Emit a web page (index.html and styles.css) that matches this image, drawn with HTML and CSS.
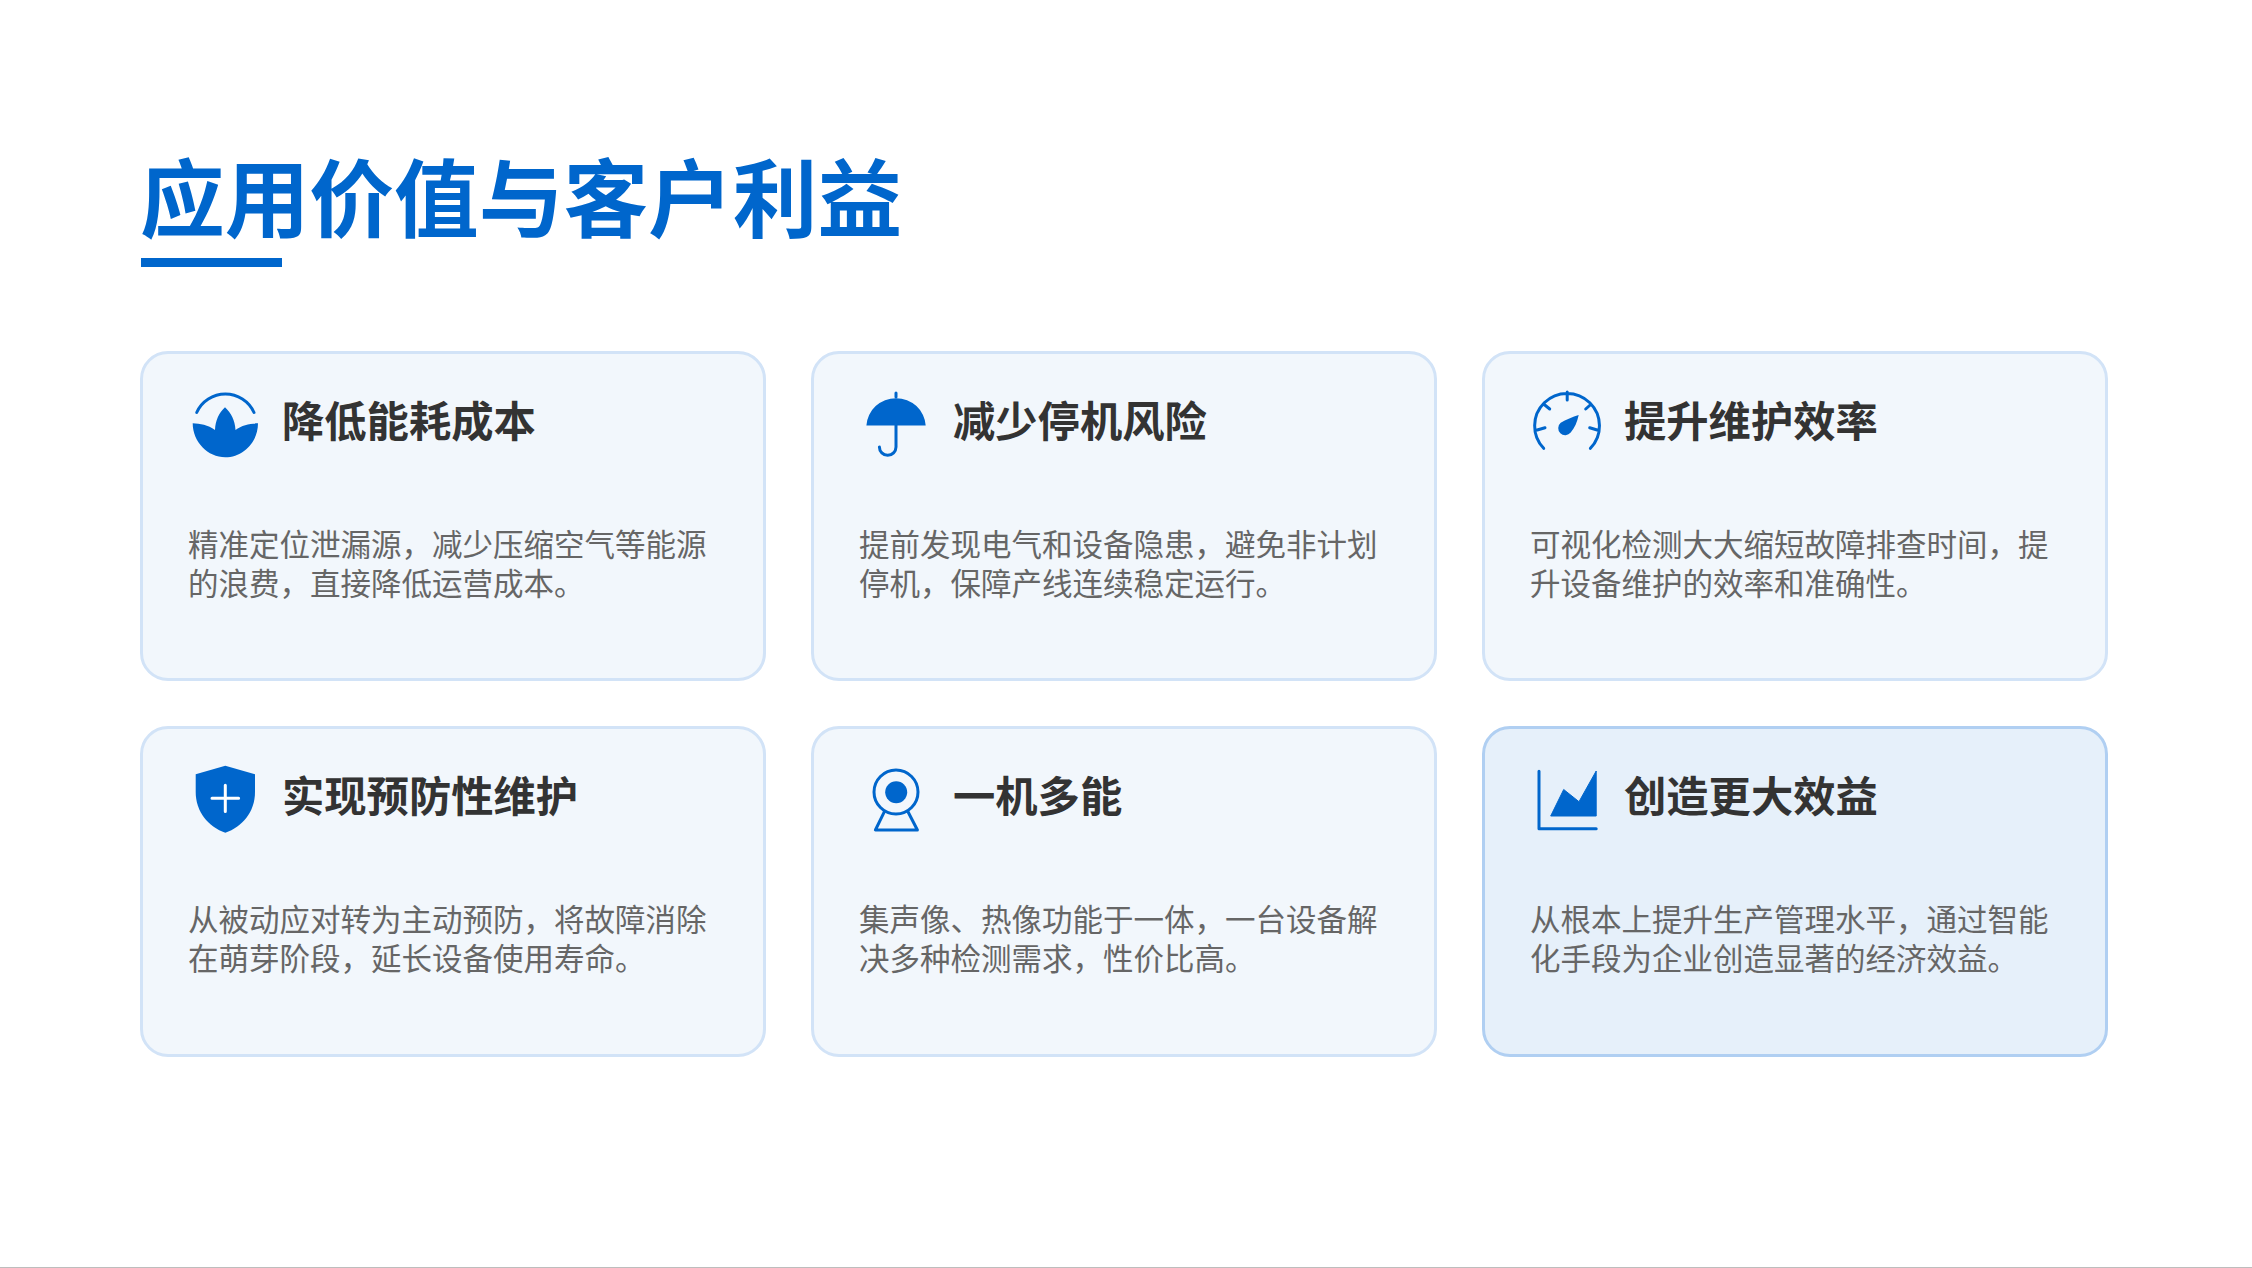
FILE: index.html
```html
<!DOCTYPE html>
<html lang="zh-CN">
<head>
<meta charset="utf-8">
<title>应用价值与客户利益</title>
<link rel="stylesheet" href="styles.css">
</head>
<body>
<main class="slide">
  <header class="header">
    <h1 class="title">应用价值与客户利益</h1>
    <div class="title-bar"></div>
  </header>
  <section class="grid">
    <article class="card">
      <div class="card-head">
        <svg class="icon" viewBox="17 16 76 76"><path class="line" d="M26.7 42.5A31.5 31.5 0 0 1 84 42.5"/><path class="solid" d="M22.7 53.3C30 53.5 38 55 45 60C45.5 50 49 43 55 37.3C61 43 65 50 65.5 60C72 55 80 53.5 88 53.3C88 72 73 87.3 55.3 87.3C38 87.3 22.7 72 22.7 53.3Z"/></svg>
        <h2 class="card-title">降低能耗成本</h2>
      </div>
      <p class="card-text">精准定位泄漏源，减少压缩空气等能源的浪费，直接降低运营成本。</p>
    </article>
    <article class="card">
      <div class="card-head">
        <svg class="icon" viewBox="18.3 16 76 76"><path class="solid" d="M26.7 55.5A29.7 29 0 0 1 86 55.5Z"/><path class="line" d="M56.3 23V27M56.3 55V77A8.3 8.3 0 0 1 39.7 77"/></svg>
        <h2 class="card-title">减少停机风险</h2>
      </div>
      <p class="card-text">提前发现电气和设备隐患，避免非计划停机，保障产线连续稳定运行。</p>
    </article>
    <article class="card">
      <div class="card-head">
        <svg class="icon" viewBox="19.3 16 76 76"><path class="line" d="M34 78.3A32.4 32.4 0 1 1 80.7 78.3M57.5 22V30M34.5 34.5L40 39M81 34.5L76 39M27.5 60L35.3 57.7M87.5 60L80 57.7"/><path class="solid" d="M69 45C67.5 52 65 58 61 62.5A7 7 0 1 1 51 52.8C56 49.5 63 47 69 45Z"/></svg>
        <h2 class="card-title">提升维护效率</h2>
      </div>
      <p class="card-text">可视化检测大大缩短故障排查时间，提升设备维护的效率和准确性。</p>
    </article>
    <article class="card">
      <div class="card-head">
        <svg class="icon" viewBox="17 11 76 76"><path class="solid" d="M55.3 15.7L85 24.3V42C85 62 72 77 55.3 82.7C38.6 77 25.7 62 25.7 42V24.3Z"/><path class="line-white" d="M42 48.3H68.6M55.3 35.3V61.5"/></svg>
        <h2 class="card-title">实现预防性维护</h2>
      </div>
      <p class="card-text">从被动应对转为主动预防，将故障消除在萌芽阶段，延长设备使用寿命。</p>
    </article>
    <article class="card">
      <div class="card-head">
        <svg class="icon" viewBox="18.3 11 76 76"><circle class="line" cx="56.3" cy="42" r="22"/><circle class="solid" cx="56.5" cy="42.3" r="11"/><path class="line" d="M44.7 61.7L35.7 80H77.7L68.3 61.7"/></svg>
        <h2 class="card-title">一机多能</h2>
      </div>
      <p class="card-text">集声像、热像功能于一体，一台设备解决多种检测需求，性价比高。</p>
    </article>
    <article class="card card-accent">
      <div class="card-head">
        <svg class="icon" viewBox="19.3 11 76 76"><path class="line" d="M29.3 21.3V78.7H86.5"/><path class="solid solid-round" d="M41 66L54 39.5L69.3 51.7L86.5 21V66Z"/></svg>
        <h2 class="card-title">创造更大效益</h2>
      </div>
      <p class="card-text">从根本上提升生产管理水平，通过智能化手段为企业创造显著的经济效益。</p>
    </article>
  </section>
</main>
</body>
</html>
```
FILE: styles.css
```css
* { box-sizing: border-box; }
html, body { margin: 0; height: 100%; }
body {
  background: #fff;
  font-family: "Noto Sans CJK SC", "Noto Sans", sans-serif;
}
.slide {
  height: 1268px;
  padding: 137px 144px 0 140px;
  border-bottom: 1px solid #bdbdbd;
  overflow: hidden;
}
.header { height: 214px; }
.title {
  margin: 0;
  font-size: 84.7px;
  line-height: 115px;
  font-weight: 700;
  color: #0066cc;
}
.title-bar {
  width: 141px;
  height: 9px;
  margin-top: 6px;
  margin-left: 1px;
  background: #0066cc;
}
.grid {
  display: grid;
  grid-template-columns: repeat(3, 1fr);
  grid-template-rows: 330px 331px;
  gap: 45px;
}
.card {
  padding: 32px 44px 0;
  border: 3px solid #d2e3f7;
  border-radius: 28px;
  background: #f2f7fc;
}
.card-accent {
  border-color: #b0cff2;
  background: #e6f0fa;
}
.card-head {
  display: flex;
  align-items: center;
  gap: 19px;
  height: 76px;
}
.icon { width: 76px; height: 76px; flex: none; }
.solid { fill: #0066cc; }
.solid-round { stroke: #0066cc; stroke-width: 1; stroke-linejoin: round; }
.line {
  fill: none;
  stroke: #0066cc;
  stroke-width: 3;
  stroke-linecap: round;
  stroke-linejoin: round;
}
.line-white {
  fill: none;
  stroke: #fff;
  stroke-width: 3;
  stroke-linecap: round;
}
.card-title {
  margin: 0 0 10px;
  font-size: 42.3px;
  line-height: 56px;
  font-weight: 700;
  color: #333;
}
.card-text {
  margin: 61.5px 0 0;
  padding-left: 1px;
  font-size: 30.5px;
  line-height: 39px;
  color: #666;
}
```
